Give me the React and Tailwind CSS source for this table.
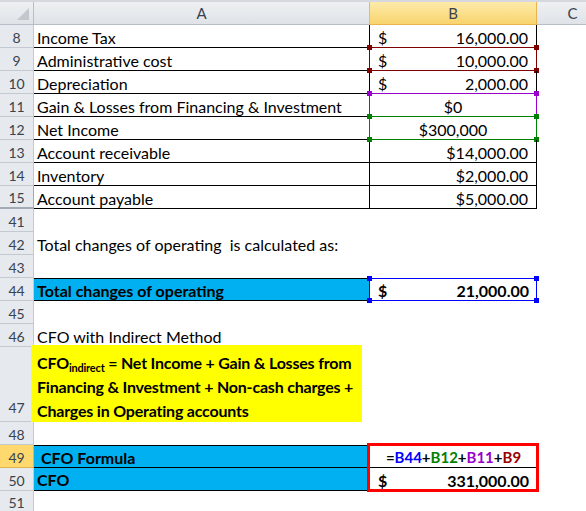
import React from 'react';

const rowHead =
  'w-[34px] shrink-0 flex items-center justify-center pt-[2px] bg-[#e6e9ed] border-r border-b border-[#c4c9d0] text-[14px] text-[#39424e]';

// coloured range outline with the little handles on the corners
function RefBox({ line, dot }) {
  return (
    <div className={`pointer-events-none absolute -left-px -top-px -right-px -bottom-px border ${line}`}>
      <span className={`absolute -left-[3px] -top-[3px] w-[5px] h-[5px] ${dot}`} />
      <span className={`absolute -right-[3px] -top-[3px] w-[5px] h-[5px] ${dot}`} />
      <span className={`absolute -left-[3px] -bottom-[3px] w-[5px] h-[5px] ${dot}`} />
      <span className={`absolute -right-[3px] -bottom-[3px] w-[5px] h-[5px] ${dot}`} />
    </div>
  );
}

function Acct({ v, bold }) {
  return (
    <div className={`flex w-full justify-between pl-[8px] pr-[8px] ${bold ? 'font-bold' : ''}`}>
      <span>$</span>
      <span>{v}</span>
    </div>
  );
}

function DataRow({ n, a, children, head = rowHead, b = '', refBox }) {
  return (
    <div className="flex h-[23px]">
      <div className={head}>{n}</div>
      <div className="w-[336px] shrink-0 flex items-center pl-[3px] pt-[3px] border-r border-b border-black whitespace-nowrap">
        {a}
      </div>
      <div className={`relative w-[167px] shrink-0 flex items-center pt-[3px] border-r border-b border-black ${b}`}>
        {children}
        {refBox}
      </div>
      <div className="flex-1" />
    </div>
  );
}

function PlainRow({ n, children, h = 'h-[23px]' }) {
  return (
    <div className={`flex ${h}`}>
      <div className={rowHead}>{n}</div>
      <div className="flex-1 flex items-center pl-[3px] pt-[2px] whitespace-pre">{children}</div>
    </div>
  );
}

export default function App() {
  return (
    <div className="relative w-[586px] h-[511px] overflow-hidden bg-white text-black text-[16px] font-[family-name:Lato,'Noto_Sans',sans-serif]">
      {/* column headers */}
      <div className="flex h-[25px] border-t-2 border-[#d5d9df]">
        <div className="relative w-[34px] shrink-0 bg-gradient-to-b from-[#eef0f3] to-[#dfe3e8] border-r border-b border-[#b7bec7]">
          <svg className="absolute right-[4px] bottom-[4px]" width="12" height="12" viewBox="0 0 12 12">
            <polygon points="12,0 12,12 0,12" fill="#c3c8cf" />
          </svg>
        </div>
        <div className="w-[336px] shrink-0 flex items-center justify-center bg-gradient-to-b from-[#eef0f3] to-[#dfe3e8] border-r border-b border-[#b7bec7] text-[15px] text-[#39424e]">
          A
        </div>
        <div className="w-[167px] shrink-0 flex items-center justify-center bg-gradient-to-b from-[#fdeaa9] to-[#f8d46c] border-r border-b border-[#e9b44c] text-[15px] text-[#39424e]">
          B
        </div>
        <div className="w-[72px] shrink-0 flex items-center justify-center bg-gradient-to-b from-[#eef0f3] to-[#dfe3e8] border-r border-b border-[#b7bec7] text-[15px] text-[#39424e]">
          C
        </div>
      </div>

      <DataRow n="8" a="Income Tax">
        <Acct v="16,000.00" />
      </DataRow>
      <DataRow n="9" a="Administrative cost" refBox={<RefBox line="border-[#800000]" dot="bg-[#800000]" />}>
        <Acct v="10,000.00" />
      </DataRow>
      <DataRow n="10" a="Depreciation">
        <Acct v="2,000.00" />
      </DataRow>
      <DataRow n="11" a="Gain & Losses from Financing & Investment" b="justify-center" refBox={<RefBox line="border-[#9900cc]" dot="bg-[#9900cc]" />}>
        $0
      </DataRow>
      <DataRow n="12" a="Net Income" b="justify-center" refBox={<RefBox line="border-[#008000]" dot="bg-[#008000]" />}>
        $300,000
      </DataRow>
      <DataRow n="13" a="Account receivable" b="justify-end pr-[8px]">
        $14,000.00
      </DataRow>
      <DataRow n="14" a="Inventory" b="justify-end pr-[8px]">
        $2,000.00
      </DataRow>
      <DataRow
        n="15"
        a="Account payable"
        b="justify-end pr-[8px]"
        head="w-[34px] shrink-0 flex items-center justify-center pt-[2px] bg-[#e6e9ed] border-r border-b-2 border-[#a3abb5] text-[14px] text-[#39424e]"
      >
        $5,000.00
      </DataRow>

      <PlainRow n="41" />
      <PlainRow n="42">Total changes of operating  is calculated as:</PlainRow>
      <PlainRow n="43" />

      {/* row 44 */}
      <div className="flex h-[23px]">
        <div className={rowHead}>44</div>
        <div className="w-[336px] shrink-0 flex items-center pl-[3px] pt-[2px] bg-[#00b0f0] border-y border-black font-bold">
          Total changes of operating
        </div>
        <div className="relative w-[167px] shrink-0 flex items-center pt-[2px]">
          <Acct v="21,000.00" bold />
          <div className="pointer-events-none absolute -left-px top-0 right-0 bottom-0 border border-[#0000ff]">
            <span className="absolute -left-[3px] -top-[3px] w-[5px] h-[5px] bg-[#0000ff]" />
            <span className="absolute -right-[3px] -top-[3px] w-[5px] h-[5px] bg-[#0000ff]" />
            <span className="absolute -left-[3px] -bottom-[3px] w-[5px] h-[5px] bg-[#0000ff]" />
            <span className="absolute -right-[3px] -bottom-[3px] w-[5px] h-[5px] bg-[#0000ff]" />
          </div>
        </div>
        <div className="flex-1" />
      </div>

      <PlainRow n="45" />
      <PlainRow n="46">CFO with Indirect Method</PlainRow>

      {/* row 47 with the yellow note */}
      <div className="relative flex h-[75px]">
        <div className="w-[34px] shrink-0 flex items-end justify-center pb-[3px] bg-[#e6e9ed] border-r border-b border-[#c4c9d0] text-[14px] text-[#39424e]">
          47
        </div>
        <div className="flex-1" />
        <div className="absolute left-[31px] -top-[2px] w-[331px] h-[77px] bg-[#ffff00] pl-[6px] pt-[6px] font-bold leading-[24px] tracking-[-0.2px] whitespace-nowrap">
          CFO<sub className="text-[11px]">indirect</sub> = Net Income + Gain &amp; Losses from
          <br />
          Financing &amp; Investment + Non-cash charges +
          <br />
          Charges in Operating accounts
        </div>
      </div>

      <PlainRow n="48" />

      {/* rows 49 / 50 */}
      <div className="flex h-[23px]">
        <div className="w-[34px] shrink-0 flex items-center justify-center pt-[2px] bg-[#ffd86e] border-r border-b border-[#e2b451] text-[14px] text-[#39424e]">
          49
        </div>
        <div className="w-[336px] shrink-0 flex items-center pl-[7px] pt-[2px] bg-[#00b0f0] border-y border-black font-bold">
          CFO Formula
        </div>
        <div className="relative w-[167px] shrink-0 flex items-center justify-center pt-[2px] border-b border-black font-bold text-[15px]">
          <span>=</span>
          <span className="text-[#0000ff]">B44</span>
          <span>+</span>
          <span className="text-[#008000]">B12</span>
          <span>+</span>
          <span className="text-[#9900cc]">B11</span>
          <span>+</span>
          <span className="text-[#990000]">B9</span>
          <div className="pointer-events-none absolute -left-[3px] -top-[2px] w-[172px] h-[49px] border-[3px] border-[#ff0000]" />
        </div>
        <div className="flex-1" />
      </div>
      <div className="flex h-[23px]">
        <div className={rowHead}>50</div>
        <div className="w-[336px] shrink-0 flex items-center pl-[3px] pt-[2px] bg-[#00b0f0] border-b border-black font-bold">
          CFO
        </div>
        <div className="w-[167px] shrink-0 flex items-center pt-[2px]">
          <Acct v="331,000.00" bold />
        </div>
        <div className="flex-1" />
      </div>
      <PlainRow n="51" h="h-[21px]" />
    </div>
  );
}
